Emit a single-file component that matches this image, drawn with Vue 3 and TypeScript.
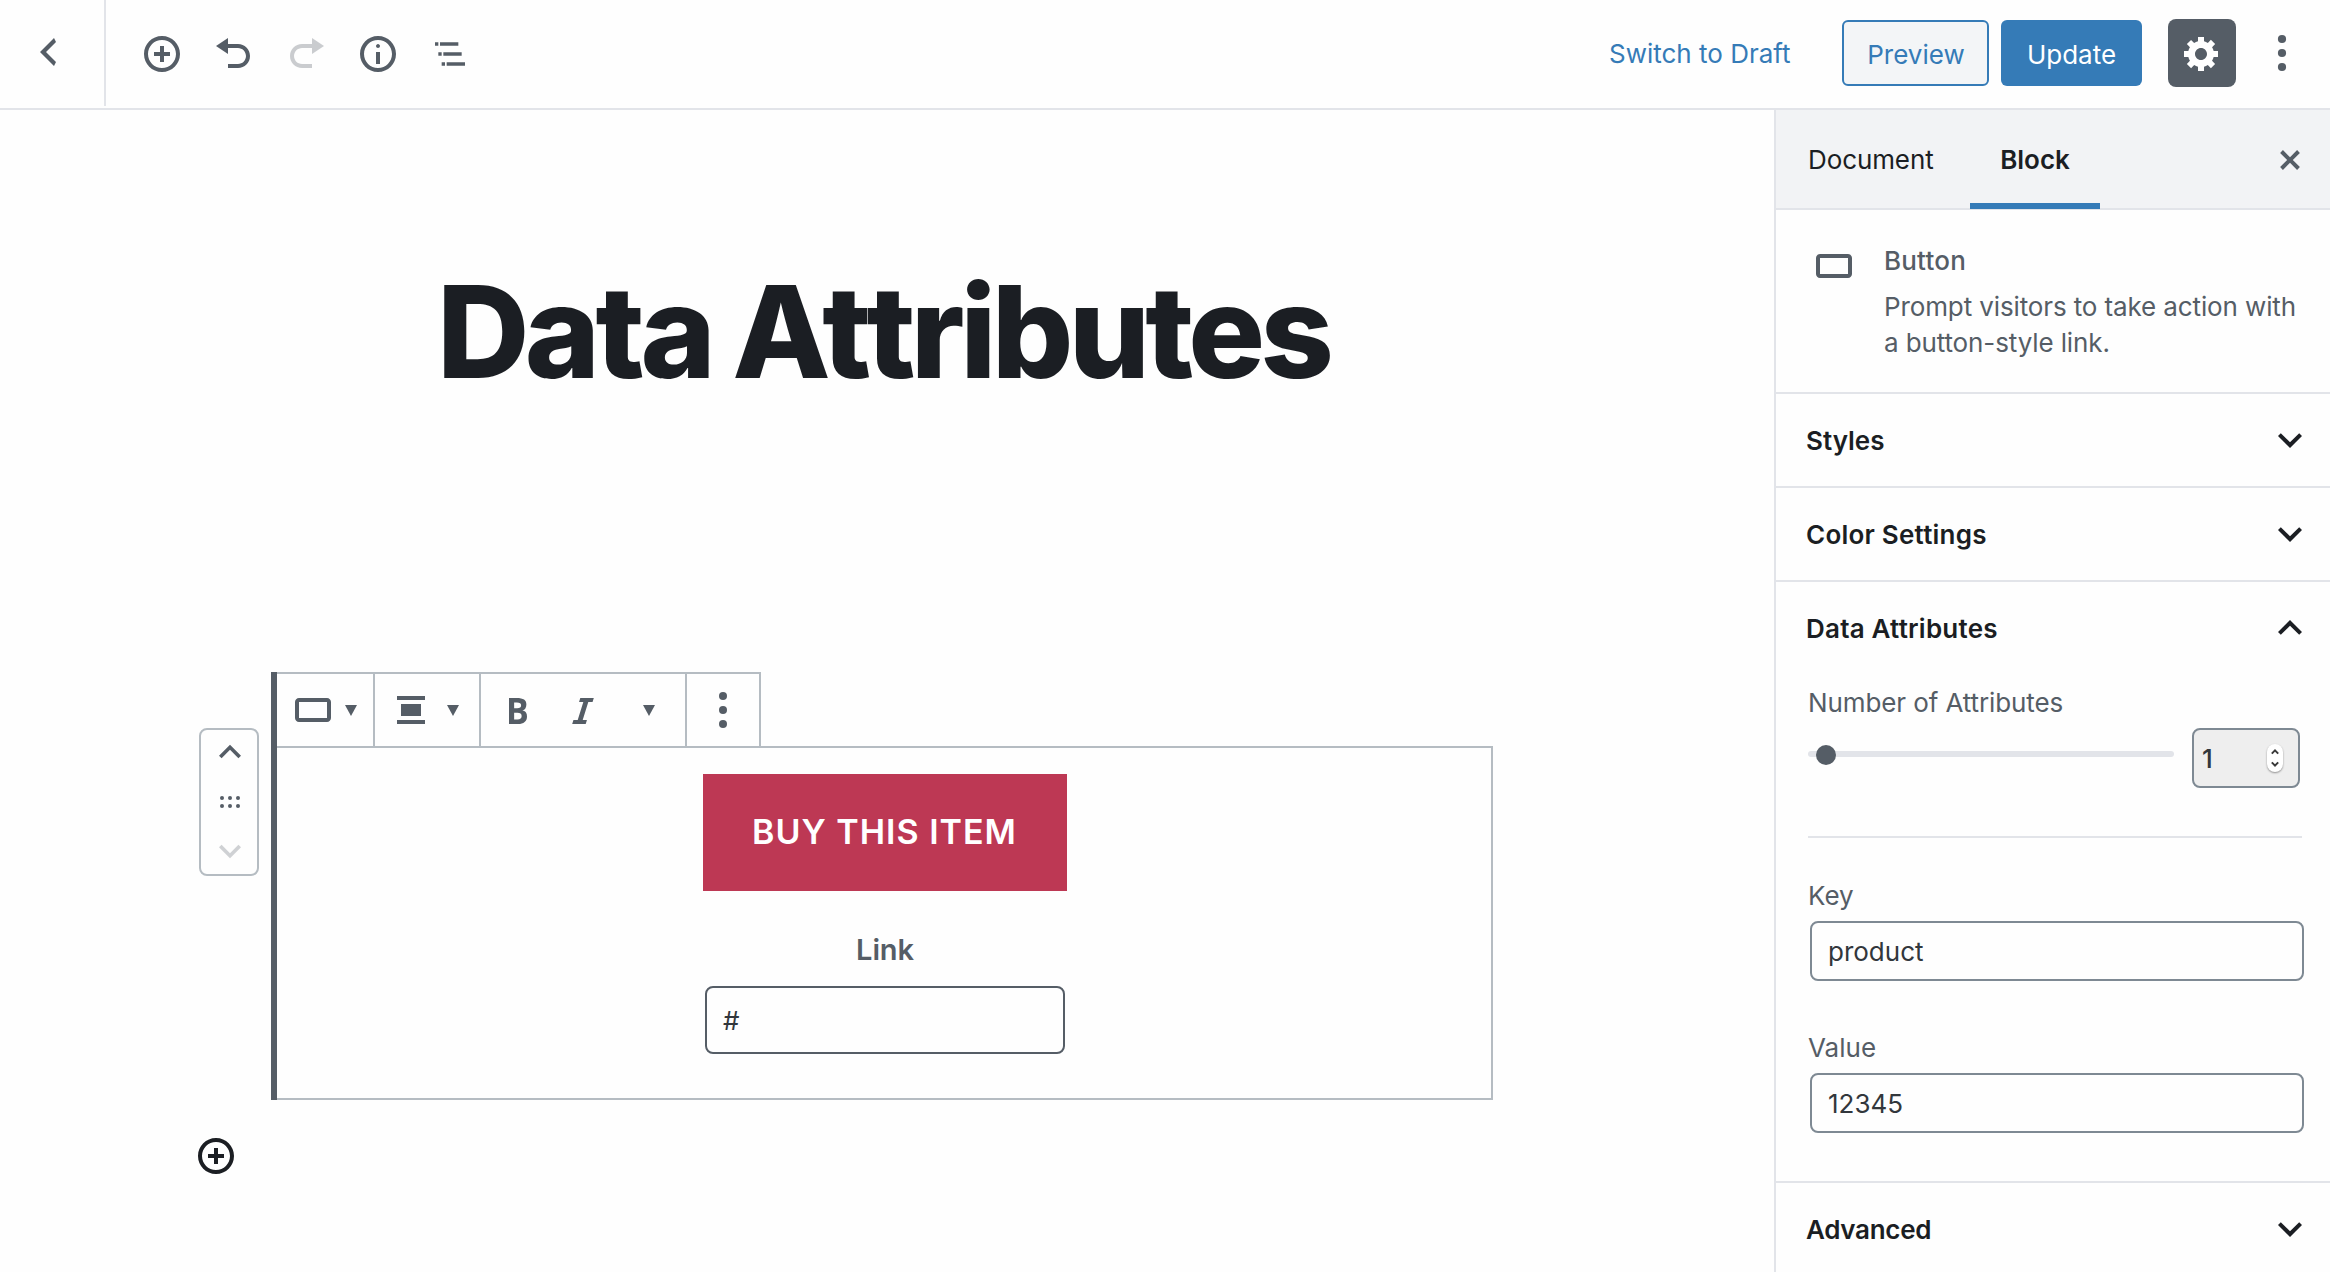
<script setup lang="ts">
import { ref } from 'vue'

// The heading is set in two runs so the double t keeps its full advance.
const titleRuns = ref(['Data At', 'tributes'])
const attributeCount = ref(1)
const key = ref('product')
const value = ref('12345')
const link = ref('#')

const chevronDown = 'M7.41,8.59L12,13.17l4.59-4.58L18,10l-6,6l-6-6L7.41,8.59z'
const chevronUp = 'M12,8l-6,6l1.41,1.41L12,10.83l4.59,4.58L18,14L12,8z'
const circlePlus =
  'M10 1c-5 0-9 4-9 9s4 9 9 9 9-4 9-9-4-9-9-9zm0 16c-3.9 0-7-3.1-7-7s3.1-7 7-7 7 3.1 7 7-3.1 7-7 7zm1-11H9v3H6v2h3v3h2v-3h3V9h-3V6z'
const buttonIcon =
  'M19 6H5c-1.1 0-2 .9-2 2v8c0 1.1.9 2 2 2h14c1.1 0 2-.9 2-2V8c0-1.1-.9-2-2-2zm0 10H5V8h14v8z'

interface Tool {
  name: string
  path: string
  box: string
  disabled?: boolean
}

const tools: Tool[] = [
  { name: 'Add block', box: '0 0 20 20', path: circlePlus },
  {
    name: 'Undo',
    box: '0 0 20 20',
    path: 'M12 5H7V2L1 6l6 4V7h5c2.2 0 4 1.8 4 4s-1.8 4-4 4H7v2h5c3.3 0 6-2.7 6-6s-2.7-6-6-6z',
  },
  {
    name: 'Redo',
    box: '0 0 20 20',
    path: 'M8 5h5V2l6 4-6 4V7H8c-2.2 0-4 1.8-4 4s1.8 4 4 4h5v2H8c-3.3 0-6-2.7-6-6s2.7-6 6-6z',
    disabled: true,
  },
  {
    name: 'Content structure',
    box: '0 0 20 20',
    path: 'M9 15h2V9H9v6zm1-10c-.5 0-1 .5-1 1s.5 1 1 1 1-.5 1-1-.5-1-1-1zm0-4c-5 0-9 4-9 9s4 9 9 9 9-4 9-9-4-9-9-9zm0 16c-3.9 0-7-3.1-7-7s3.1-7 7-7 7 3.1 7 7-3.1 7-7 7z',
  },
  {
    name: 'Block navigation',
    box: '0 0 24 24',
    path: 'M5 5H3v2h2V5zm3 8h11v-2H8v2zm9-8H6v2h11V5zM7 11H5v2h2v-2zm0 8h2v-2H7v2zm3-2v2h11v-2H10z',
  },
]
</script>

<template>
  <div class="editor">
    <header class="header">
      <a class="back" aria-label="Back">
        <svg width="40" height="40" viewBox="0 0 20 20"><path d="M14 5l-5 5 5 5-1 2-7-7 7-7z" /></svg>
      </a>
      <div class="tools">
        <svg
          v-for="tool in tools"
          :key="tool.name"
          :class="{ disabled: tool.disabled }"
          :aria-label="tool.name"
          :viewBox="tool.box"
          width="40"
          height="40"
        >
          <path :d="tool.path" />
        </svg>
      </div>
      <div class="actions">
        <a class="draft">Switch to Draft</a>
        <button class="btn preview"><span>Preview</span></button>
        <button class="btn update"><span>Update</span></button>
        <button class="gear" aria-label="Settings">
          <svg width="40" height="40" viewBox="0 0 20 20">
            <path
              d="M18 12h-2.18c-.17.7-.44 1.35-.81 1.93l1.54 1.54-2.1 2.1-1.54-1.54c-.58.36-1.23.63-1.91.79V19H8v-2.18c-.68-.16-1.33-.43-1.91-.79l-1.54 1.54-2.12-2.12 1.54-1.54c-.36-.58-.63-1.23-.79-1.91H1V9.03h2.17c.16-.7.44-1.35.8-1.94L2.43 5.55l2.1-2.1 1.54 1.54c.58-.37 1.24-.64 1.93-.81V2h3v2.18c.68.16 1.33.43 1.91.79l1.54-1.54 2.12 2.12-1.54 1.54c.36.59.64 1.24.8 1.94H18V12zm-8.5 1.5c1.66 0 3-1.34 3-3s-1.34-3-3-3-3 1.34-3 3 1.34 3 3 3z"
            />
          </svg>
        </button>
        <svg class="more" width="10" height="38" viewBox="0 0 10 38">
          <circle cx="5" cy="5" r="4.1" /><circle cx="5" cy="19" r="4.1" /><circle cx="5" cy="33" r="4.1" />
        </svg>
      </div>
    </header>

    <div class="body">
      <main class="canvas">
        <h1 class="title"><span class="lead">{{ titleRuns[0] }}</span>{{ titleRuns[1] }}</h1>

        <div class="block-row">
          <div class="mover">
            <svg width="44" height="44" viewBox="0 0 24 24"><path :d="chevronUp" /></svg>
            <svg class="drag" width="20" height="12" viewBox="0 0 20 12">
              <circle cx="2" cy="2" r="2" /><circle cx="10" cy="2" r="2" /><circle cx="18" cy="2" r="2" />
              <circle cx="2" cy="10" r="2" /><circle cx="10" cy="10" r="2" /><circle cx="18" cy="10" r="2" />
            </svg>
            <svg class="down" width="44" height="44" viewBox="0 0 24 24"><path :d="chevronDown" /></svg>
          </div>

          <section class="block">
            <div class="toolbar">
              <div class="group type">
                <svg width="48" height="48" viewBox="0 0 24 24"><path :d="buttonIcon" /></svg>
                <i class="caret"></i>
              </div>
              <div class="group align">
                <svg width="28" height="28" viewBox="0 0 28 28"><path d="M0 0h28v4H0zM4 8h20v12H4zM0 24h28v4H0z" /></svg>
                <i class="caret"></i>
              </div>
              <div class="group format">
                <svg width="40" height="40" viewBox="0 0 20 20">
                  <path
                    d="M6 4v13h4.54c1.37 0 2.46-.33 3.26-1 .8-.66 1.2-1.58 1.2-2.77 0-.84-.17-1.51-.51-2.01s-.9-.85-1.67-1.03v-.09c.57-.1 1.02-.4 1.36-.9s.51-1.13.51-1.91c0-1.14-.39-1.98-1.17-2.5C12.75 4.26 11.5 4 9.78 4H6zm2.57 5.15V6.26h1.36c.73 0 1.27.11 1.61.32.34.22.51.58.51 1.07 0 .54-.16.92-.47 1.15s-.82.35-1.51.35h-1.5zm0 2.19h1.6c1.44 0 2.16.53 2.16 1.61 0 .6-.17 1.05-.51 1.34s-.86.43-1.57.43H8.57v-3.38z"
                  />
                </svg>
                <svg width="40" height="40" viewBox="0 0 20 20">
                  <path d="M14.78 6h-2.13l-2.8 9h2.12l-.62 2H4.6l.62-2h2.14l2.8-9H8.03l.62-2h6.75z" />
                </svg>
                <i class="caret"></i>
              </div>
              <div class="group options">
                <svg width="10" height="38" viewBox="0 0 10 38">
                  <circle cx="5" cy="5" r="4" /><circle cx="5" cy="19" r="4" /><circle cx="5" cy="33" r="4" />
                </svg>
              </div>
            </div>
            <div class="content">
              <div class="cta"><span>BUY THIS ITEM</span></div>
              <label class="link-label">Link</label>
              <div class="link-input">{{ link }}</div>
            </div>
          </section>
        </div>

        <svg class="appender" width="40" height="40" viewBox="0 0 20 20"><path :d="circlePlus" /></svg>
      </main>

      <aside class="sidebar">
        <nav class="tabs">
          <button class="tab doc">Document</button>
          <button class="tab active">Block</button>
          <svg class="close" width="40" height="40" viewBox="0 0 20 20">
            <path d="M14.95 6.46L11.41 10l3.54 3.54-1.41 1.41L10 11.42l-3.53 3.53-1.42-1.42L8.58 10 5.05 6.47l1.42-1.42L10 8.58l3.54-3.53z" />
          </svg>
        </nav>

        <div class="card">
          <svg width="48" height="48" viewBox="0 0 24 24"><path :d="buttonIcon" /></svg>
          <div class="card-text">
            <h2>Button</h2>
            <p>Prompt visitors to take action with<br />a button-style link.</p>
          </div>
        </div>

        <div class="panel-head">
          <span>Styles</span>
          <svg width="48" height="48" viewBox="0 0 24 24"><path :d="chevronDown" /></svg>
        </div>
        <div class="panel-head">
          <span class="wide">Color Settings</span>
          <svg width="48" height="48" viewBox="0 0 24 24"><path :d="chevronDown" /></svg>
        </div>
        <div class="panel">
          <div class="panel-head open">
            <span class="wide">Data Attributes</span>
            <svg width="48" height="48" viewBox="0 0 24 24"><path :d="chevronUp" /></svg>
          </div>
          <div class="panel-body">
            <label class="t-number">Number of Attributes</label>
            <div class="range">
              <div class="track"><div class="thumb"></div></div>
              <div class="number">
                <span>{{ attributeCount }}</span>
                <svg class="spinner" width="16" height="28" viewBox="0 0 16 28">
                  <path d="M4.8 9.6L8 6.4l3.2 3.2M4.8 18.4L8 21.6l3.2-3.2" />
                </svg>
              </div>
            </div>
            <hr />
            <label class="t-key">Key</label>
            <div class="field key">{{ key }}</div>
            <label class="t-value">Value</label>
            <div class="field value">{{ value }}</div>
          </div>
        </div>
        <div class="panel-head last">
          <span class="tight">Advanced</span>
          <svg width="48" height="48" viewBox="0 0 24 24"><path :d="chevronDown" /></svg>
        </div>
      </aside>
    </div>
  </div>
</template>

<style>
html,
body {
  margin: 0;
  overflow: hidden;
  background: #fefefe;
}
</style>

<style scoped>
.editor,
.editor * {
  box-sizing: border-box;
}
.editor {
  width: 2330px;
  height: 1272px;
  overflow: hidden;
  background: #fefefe;
  font-family: Inter, 'Liberation Sans', sans-serif;
  font-size: 26px;
  line-height: 37px;
  color: #555d66;
  display: flex;
  flex-direction: column;
}
svg {
  display: block;
  flex: none;
  fill: #555d66;
}
button {
  font: inherit;
  margin: 0;
  padding: 0;
  border: 0;
}
.header {
  height: 110px;
  flex: none;
  display: flex;
  border-bottom: 2px solid #e2e4e9;
}
.back {
  width: 106px;
  height: 106px;
  padding: 32px 0 0 28px;
  border-right: 2px solid #e2e4e9;
}
.tools {
  display: flex;
  gap: 32px;
  padding: 34px 0 0 36px;
}
.disabled {
  opacity: 0.3;
}
.actions {
  margin-left: auto;
  display: flex;
  align-items: flex-start;
  padding: 19px 43px 0 0;
}
.draft {
  width: 233px;
  margin-top: 16px;
  color: #357bb7;
  white-space: nowrap;
}
.btn {
  height: 66px;
  margin-top: 1px;
  border-radius: 6px;
  display: flex;
  justify-content: center;
  align-items: center;
  white-space: nowrap;
  padding-top: 2px;
}
.preview {
  width: 147px;
  padding-left: 1px;
  border: 2px solid #357bb7;
  background: #f3f5f7;
  color: #357bb7;
}
.update {
  width: 141px;
  margin-left: 12px;
  background: #357bb7;
  color: #fff;
}
.gear {
  width: 68px;
  height: 68px;
  margin-left: 26px;
  border-radius: 8px;
  background: #555d66;
  display: flex;
  align-items: center;
  justify-content: center;
}
.gear svg {
  fill: #fff;
}
.more {
  margin: 15px 0 0 41px;
}
.body {
  flex: 1;
  min-height: 0;
  display: flex;
}
.canvas {
  width: 1774px;
  display: flex;
  flex-direction: column;
}
.title {
  margin: 144px 0 0;
  padding-right: 8px;
  height: 155px;
  text-align: center;
  font-size: 128px;
  line-height: 155px;
  font-weight: 800;
  letter-spacing: -4.7px;
  word-spacing: -2.4px;
  color: #1b1e23;
  white-space: nowrap;
}
.lead {
  letter-spacing: -4.6px;
}
.block-row {
  display: flex;
  margin: 263px 0 0 199px;
  gap: 12px;
}
.mover {
  width: 60px;
  height: 148px;
  margin-top: 56px;
  padding-left: 2px;
  border: 2px solid #b5bcc2;
  border-radius: 8px;
  display: flex;
  flex-direction: column;
  align-items: center;
}
.drag {
  margin-top: 22px;
}
.mover .down {
  margin-top: 21px;
  opacity: 0.27;
}
.block {
  width: 1222px;
  height: 428px;
  border-left: 6px solid #555d66;
}
.toolbar {
  width: 484px;
  height: 74px;
  border-top: 2px solid #b5bcc2;
  display: flex;
}
.group {
  display: flex;
  align-items: center;
  border-right: 2px solid #b5bcc2;
}
.caret {
  width: 0;
  height: 0;
  border: 6px solid transparent;
  border-top: 11px solid #555d66;
  border-bottom: 0;
}
.type {
  width: 98px;
  padding-left: 12px;
}
.type .caret {
  margin-left: 8px;
}
.align {
  width: 106px;
  padding-left: 22px;
}
.align .caret {
  margin-left: 22px;
}
.format {
  width: 206px;
  padding-left: 16px;
}
.format svg + svg {
  margin-left: 26px;
}
.format .caret {
  margin-left: 40px;
}
.options {
  width: 74px;
  padding-left: 31px;
}
.content {
  height: 354px;
  border: 2px solid #b5bcc2;
  border-left: 0;
  padding-left: 2px;
  display: flex;
  flex-direction: column;
  align-items: center;
}
.cta {
  width: 364px;
  height: 117px;
  margin-top: 26px;
  padding: 0 1px 2px 0;
  background: #bd3854;
  color: #fff;
  display: flex;
  justify-content: center;
  align-items: center;
  font-size: 34px;
  font-weight: 600;
  letter-spacing: 1px;
  white-space: nowrap;
}
.link-label {
  margin-top: 40px;
  font-size: 29px;
  line-height: 37px;
  font-weight: 600;
  letter-spacing: -0.1px;
}
.link-input {
  width: 360px;
  height: 68px;
  margin-top: 18px;
  padding: 14px 16px;
  border: 2px solid #555d66;
  border-radius: 8px;
  color: #32373c;
}
.appender {
  margin: 36px 0 0 196px;
  fill: #1b1e23;
}
.sidebar {
  flex: 1;
  border-left: 2px solid #e2e4e9;
}
.tabs {
  height: 100px;
  display: flex;
  background: #f2f3f5;
  border-bottom: 2px solid #e2e4e9;
  color: #1b1e23;
}
.tab {
  background: none;
  color: inherit;
  height: 99px;
  white-space: nowrap;
}
.doc {
  width: 194px;
  padding-left: 32px;
  text-align: left;
  letter-spacing: -0.1px;
}
.active {
  width: 130px;
  font-weight: 600;
  border-bottom: 6px solid #357bb7;
  padding-top: 6px;
}
.close {
  margin: 30px 0 0 170px;
}
.card {
  height: 184px;
  padding: 32px 0 0 34px;
  display: flex;
  border-bottom: 2px solid #e2e4e9;
}
.card-text {
  margin-left: 26px;
  white-space: nowrap;
}
.card h2 {
  margin: 0;
  font-size: 26px;
  line-height: 37px;
  font-weight: 500;
  letter-spacing: 0.2px;
}
.card p {
  margin: 10px 0 0;
  line-height: 36px;
  letter-spacing: -0.12px;
}
.panel-head {
  height: 94px;
  padding: 0 16px 0 30px;
  display: flex;
  align-items: center;
  justify-content: space-between;
  border-bottom: 2px solid #e2e4e9;
  font-weight: 600;
  color: #1b1e23;
}
.panel-head span {
  padding-top: 1px;
}
.panel-head .wide {
  letter-spacing: 0.22px;
}
.panel-head .tight {
  letter-spacing: -0.3px;
}
.panel-head svg {
  fill: #1b1e23;
}
.panel-head.open {
  border-bottom: 0;
  padding-bottom: 2px;
}
.panel-head.last {
  border-bottom: 0;
  padding-bottom: 2px;
}
.panel {
  height: 601px;
  border-bottom: 2px solid #e2e4e9;
}
.panel-body {
  padding: 8px 26px 0 32px;
}
label {
  display: block;
  height: 37px;
  white-space: nowrap;
}
.t-number {
  letter-spacing: -0.1px;
}
.range {
  display: flex;
  align-items: flex-start;
  margin-top: 7px;
}
.track {
  width: 366px;
  height: 6px;
  margin-top: 23px;
  border-radius: 3px;
  background: #e2e4e9;
}
.thumb {
  width: 20px;
  height: 20px;
  margin: -6px 0 0 8px;
  border-radius: 50%;
  background: #555d66;
}
.number {
  width: 108px;
  height: 60px;
  margin-left: 18px;
  border: 2px solid #7e8993;
  border-radius: 8px;
  background: #eee;
  color: #32373c;
  display: flex;
  align-items: center;
  justify-content: space-between;
  padding: 0 15px 0 8px;
  font-weight: 500;
}
.spinner {
  border-radius: 8px;
  background: #fff;
  box-shadow: 0 1px 2px rgba(0, 0, 0, 0.4);
}
.spinner path {
  fill: none;
  stroke: #3a3a3a;
  stroke-width: 2;
}
hr {
  margin: 48px 2px 0 0;
  width: 494px;
  border: 0;
  height: 2px;
  background: #e2e4e9;
}
.t-key {
  margin-top: 39px;
}
.field {
  width: 494px;
  height: 60px;
  margin: 7px 0 0 2px;
  padding: 10px 16px;
  border: 2px solid #7e8993;
  border-radius: 8px;
  color: #32373c;
}
.t-value {
  margin-top: 48px;
}
</style>
